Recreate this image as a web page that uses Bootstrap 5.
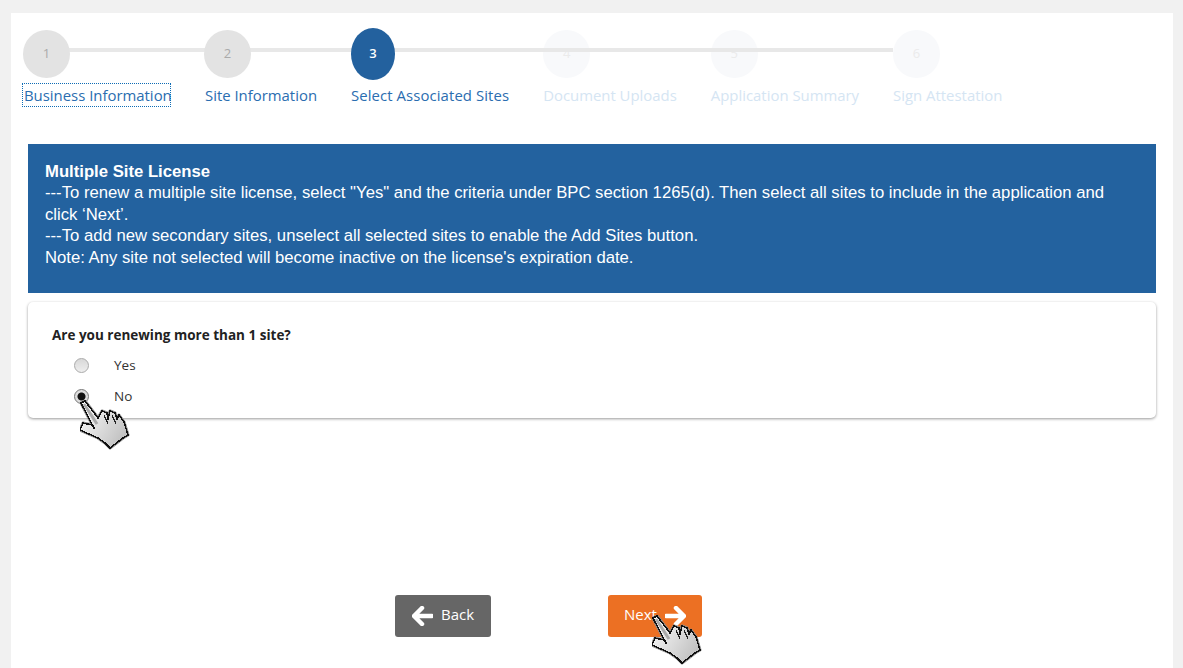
<!DOCTYPE html>
<html lang="en">
<head>
    <meta charset="UTF-8">
    <meta name="viewport" content="width=device-width, initial-scale=1.0">
    <title>Select Associated Sites</title>
    <link href="https://cdn.jsdelivr.net/npm/bootstrap@5.3.0/dist/css/bootstrap.min.css" rel="stylesheet">
    <style>
        html, body { height: 100%; }
        body { background: #f1f1f1; font-family: "Open Sans", sans-serif; overflow: hidden; }
        .page-panel { background: #fff; margin: 13px 10px 0 11px; height: 655px; padding: 15px 17px 0 11px; position: relative; }
        .stepper { position: relative; gap: 34px; height: 116px; }
        .stepper-line { position: absolute; left: 12px; top: 20px; width: 859px; height: 4px; background: #e8e8e8; }
        .step { position: relative; color: #2a6db0; font-size: 14.9px; }
        .step-dot { width: 47px; height: 48px; border-radius: 50%; background: #e3e3e3; color: #aaa; font-size: 13px; margin-top: 2px; }
        .step-label { margin-top: 6px; line-height: 22px; height: 22px; white-space: nowrap; }
        .step-first { width: 148px; flex: none; }
        .step-first .step-label { outline: 1px dotted #0e6cb5; margin-left: 1px; padding-left: 1px; }
        .step-first .step-dot { margin-left: 1px; }
        .step-second .step-label { padding-left: 1px; }
        .step-current .step-dot { width: 44px; height: 52px; margin-top: 0; background: #23619e; color: #fff; font-weight: 600; }
        .step-current .step-label { margin-top: 4px; letter-spacing: .09px; }
        .step-off { position: static; color: #d5e5f3; }
        .step-off .step-dot { background: #f8f9fb; color: #ebebeb; }
        .site-notice { background: #23629f; color: #fff; font-family: "Liberation Sans", sans-serif; font-size: 16.7px; line-height: 21.4px; margin-left: 6px; height: 149px; padding: 17px 24px 0 17px; }
        .site-card { margin: 9px 0 0 6px; height: 116px; border: 0; border-radius: 5px; box-shadow: 0 1px 3px rgba(0,0,0,.4); padding: 23px 24px 0; color: #333; font-size: 13.5px; }
        .site-question { color: #222; font-weight: 700; font-size: 13.5px; line-height: 20px; margin-bottom: 10px; }
        .site-option { gap: 25px; margin: 0 0 0 22px; height: 31px; font-size: 13.5px; }
        .site-radio { width: 15px; height: 15px; border-radius: 50%; border: 1px solid #aaa; background: linear-gradient(#d8d8d8, #eee); flex: none; margin-top: 3px; }
        .site-radio.on { background: radial-gradient(circle, #111 0 3.5px, #ddd 4.5px); border-color: #777; }
        .form-actions { margin-top: 177px; }
        .btn-step { width: 96px; height: 42px; color: #fff; border: 0; border-radius: 3px; font-size: 15px; padding: 0; gap: 8px; }
        .btn-step span { padding-bottom: 4px; }
        .btn-back { background: #666; margin-left: 373px; }
        .btn-next { background: #ec7023; width: 94px; margin-left: 117px; }
        .hand { position: absolute; width: 50px; height: 50px; }
        .hand-radio { left: 69px; top: 387px; }
        .hand-next { left: 641px; top: 602px; }
    </style>
</head>
<body>
    <svg width="0" height="0" class="position-absolute">
        <defs>
            <linearGradient id="handFill" x1="0" y1="0" x2="1" y2="0.6">
                <stop offset="0" stop-color="#fff"/>
                <stop offset="1" stop-color="#c2c2c2"/>
            </linearGradient>
            <symbol id="handIcon" viewBox="0 0 50 50">
                <path d="M1 3 L5 1 L18 18 L22 11 L27 13 L28 19 L30 11 L35 13 L37 19 L39 15 L44 22 L48 35 L43 38 L30 48 L25 43 L18 38 L0 30 L3 23 L12 25 L14 28 Z" fill="url(#handFill)" stroke="#888" stroke-width="3" stroke-linejoin="round"/>
                <path d="M1 3 L5 1 L18 18 L22 11 L27 13 L28 19 L30 11 L35 13 L37 19 L39 15 L44 22 L48 35 L43 38 L30 48 L25 43 L18 38 L0 30 L3 23 L12 25 L14 28 Z" fill="url(#handFill)" stroke="#111" stroke-width="1.5" stroke-linejoin="round" shape-rendering="crispEdges"/>
                <path d="M4 4 L17 24" fill="none" stroke="#aaa" stroke-width="3"/>
                <path d="M24 15 L28 24 M32 15 L36 24" fill="none" stroke="#222" stroke-width="1.2" shape-rendering="crispEdges"/>
            </symbol>
        </defs>
    </svg>
    <div class="page-panel">
        <div class="stepper d-flex">
            <div class="stepper-line"></div>
            <div class="step step-first">
                <div class="step-dot d-flex align-items-center justify-content-center">1</div>
                <div class="step-label">Business Information</div>
            </div>
            <div class="step step-second">
                <div class="step-dot d-flex align-items-center justify-content-center">2</div>
                <div class="step-label">Site Information</div>
            </div>
            <div class="step step-current">
                <div class="step-dot d-flex align-items-center justify-content-center">3</div>
                <div class="step-label">Select Associated Sites</div>
            </div>
            <div class="step step-off">
                <div class="step-dot d-flex align-items-center justify-content-center">4</div>
                <div class="step-label">Document Uploads</div>
            </div>
            <div class="step step-off">
                <div class="step-dot d-flex align-items-center justify-content-center">5</div>
                <div class="step-label">Application Summary</div>
            </div>
            <div class="step step-off">
                <div class="step-dot d-flex align-items-center justify-content-center">6</div>
                <div class="step-label">Sign Attestation</div>
            </div>
        </div>

        <div class="site-notice">
            <strong>Multiple Site License</strong><br>
            ---To renew a multiple site license, select "Yes" and the criteria under BPC section 1265(d). Then select all sites to include in the application and click ‘Next’.<br>
            ---To add new secondary sites, unselect all selected sites to enable the Add Sites button.<br>
            Note: Any site not selected will become inactive on the license's expiration date.
        </div>

        <div class="card site-card">
            <div class="site-question">Are you renewing more than 1 site?</div>
            <div class="site-option d-flex align-items-start"><span class="site-radio"></span><span>Yes</span></div>
            <div class="site-option d-flex align-items-start"><span class="site-radio on"></span><span>No</span></div>
        </div>

        <div class="form-actions d-flex">
            <button type="button" class="btn btn-step btn-back d-flex align-items-center justify-content-center">
                <svg width="21" height="20" viewBox="0 0 21 20"><path d="M10 2 L2 10 L10 18 M3 10 H20" fill="none" stroke="#fff" stroke-width="4.5" stroke-linecap="round" stroke-linejoin="round"/></svg>
                <span>Back</span>
            </button>
            <button type="button" class="btn btn-step btn-next d-flex align-items-center justify-content-center">
                <span>Next</span>
                <svg width="21" height="20" viewBox="0 0 21 20"><path d="M11 2 L19 10 L11 18 M18 10 H1" fill="none" stroke="#fff" stroke-width="4.5" stroke-linecap="round" stroke-linejoin="round"/></svg>
            </button>
        </div>

        <svg class="hand hand-radio"><use href="#handIcon"/></svg>
        <svg class="hand hand-next"><use href="#handIcon"/></svg>
    </div>
    <script src="https://cdn.jsdelivr.net/npm/bootstrap@5.3.0/dist/js/bootstrap.bundle.min.js"></script>
</body>
</html>
